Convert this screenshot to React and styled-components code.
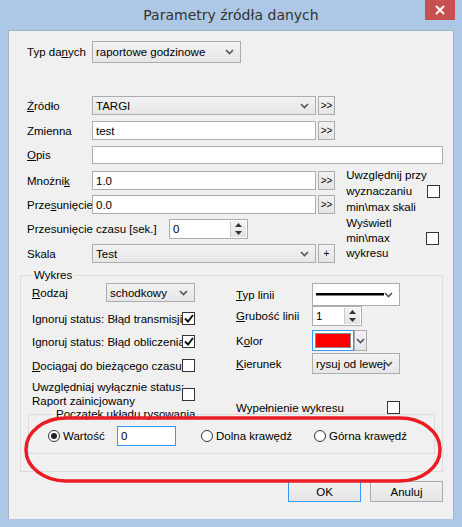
import React from "react";
import styled, { createGlobalStyle } from "styled-components";

const G = createGlobalStyle`
  html,body{margin:0;padding:0;background:#adc8e6;}
  body{font-family:"Liberation Sans",Arial,sans-serif;font-size:11.5px;color:#000;}
`;
const Win = styled.div`width:462px;height:527px;background:#adc8e6;position:relative;display:flex;flex-direction:column;box-sizing:border-box;`;
const TitleBar = styled.div`height:30px;display:flex;align-items:center;justify-content:center;position:relative;font-family:"DejaVu Sans",sans-serif;font-size:14px;color:#333;`;
const Close = styled.div`position:absolute;right:7px;top:0;width:30px;height:20px;background:#c75050;display:flex;align-items:center;justify-content:center;`;
const Client = styled.div`margin:0 8px;height:489px;background:#f0f0f0;border:1px solid #a0b4ca;border-bottom:none;box-sizing:border-box;padding:10px 10px 0 11px;display:flex;flex-direction:column;position:relative;`;
const Row = styled.div`display:flex;align-items:center;height:${p=>p.h||19}px;margin-top:${p=>p.mt||0}px;padding-left:${p=>p.pl??7}px;`;
const Label = styled.span`width:${p=>p.w||65}px;flex:none;white-space:nowrap;line-height:14px;`;
const Field = styled.div`width:${p=>p.w}px;height:${p=>p.h||19}px;box-sizing:border-box;border:1px solid ${p=>p.blue?"#3399ff":"#abadb3"};background:${p=>p.grey?"linear-gradient(#f2f2f2,#e6e6e6)":"#fff"};display:flex;align-items:center;padding-left:3px;flex:none;position:relative;white-space:nowrap;`;
const Arrow = styled.span`position:absolute;right:6px;top:50%;transform:translateY(-50%);display:flex;`;
const Btn = styled.div`width:17px;height:19px;box-sizing:border-box;border:1px solid #acacac;background:linear-gradient(#f2f2f2,#e5e5e5);margin-left:2px;display:flex;align-items:center;justify-content:center;font-size:10px;flex:none;`;
const Box = styled.div`width:13px;height:13px;border:1px solid #333;background:#fff;box-sizing:border-box;flex:none;display:flex;align-items:center;justify-content:center;`;
const Spin = styled.div`position:absolute;right:1px;top:1px;bottom:1px;width:15px;background:linear-gradient(#f4f4f4,#e2e2e2);border-left:1px solid #ccc;display:flex;flex-direction:column;align-items:center;justify-content:space-around;`;
const Fs = styled.fieldset`margin:0;border:1px solid #dcdcdc;padding:${p=>p.pad};box-sizing:border-box;position:relative;`;
const Lg = styled.legend`padding:0 2px;margin-left:6px;line-height:12px;`;
const Cols = styled.div`display:flex;`;
const Col = styled.div`display:flex;flex-direction:column;width:${p=>p.w}px;`;
const SideText = styled.div`display:flex;justify-content:space-between;align-items:center;width:93px;line-height:16px;white-space:nowrap;`;
const Radio = styled.span`width:12px;height:12px;border-radius:50%;border:1px solid #333;box-sizing:border-box;background:#fff;display:inline-flex;align-items:center;justify-content:center;margin-right:3px;flex:none;`;
const Dot = styled.span`width:6px;height:6px;border-radius:50%;background:#222;`;
const Footer = styled.div`display:flex;justify-content:flex-end;gap:9px;margin-top:9px;`;
const PushBtn = styled.div`width:73px;height:21px;box-sizing:border-box;border:1px solid ${p=>p.def?"#3399ff":"#acacac"};background:linear-gradient(#f0f0f0,#e5e5e5);display:flex;align-items:center;justify-content:center;`;
const Ellipse = styled.svg`position:absolute;left:15px;top:385px;pointer-events:none;`;

const Chev = () => <svg width="9" height="6" viewBox="0 0 9 6"><path d="M1 1l3.5 3.5L8 1" stroke="#555" strokeWidth="1.6" fill="none"/></svg>;
const Check = () => <svg width="10" height="9" viewBox="0 0 10 9"><path d="M1 4.5l3 3L9 1" stroke="#111" strokeWidth="2" fill="none"/></svg>;
const Sel = ({w,h,children}) => <Field w={w} h={h} grey>{children}<Arrow><Chev/></Arrow></Field>;
const SpinField = ({w,v}) => <Field w={w} h={20}>{v}<Spin><svg width="7" height="4"><path d="M0 4L3.5 0L7 4z" fill="#333"/></svg><svg width="7" height="4"><path d="M0 0L3.5 4L7 0z" fill="#333"/></svg></Spin></Field>;
const U = styled.u``;

export default function App(){
  return <Win><G/>
    <TitleBar>Parametry źródła danych
      <Close><svg width="10" height="10"><path d="M1 1L9 9M9 1L1 9" stroke="#fff" strokeWidth="2"/></svg></Close>
    </TitleBar>
    <Client>
      <Row h={22}><Label>Typ da<U>n</U>ych</Label><Sel w={149} h={22}>raportowe godzinowe</Sel></Row>
      <Row mt={33}><Label><U>Ź</U>ródło</Label><Sel w={224}>TARGI</Sel><Btn>&gt;&gt;</Btn></Row>
      <Row mt={6}><Label>Zmienna</Label><Field w={224}>test</Field><Btn>&gt;&gt;</Btn></Row>
      <Row mt={6} h={18}><Label><U>O</U>pis</Label><Field w={351} h={18}/></Row>
      <Cols>
        <Col w={337}>
          <Row mt={7}><Label>Mnożni<U>k</U></Label><Field w={224}>1.0</Field><Btn>&gt;&gt;</Btn></Row>
          <Row mt={5}><Label>Prze<U>s</U>unięcie</Label><Field w={224}>0.0</Field><Btn>&gt;&gt;</Btn></Row>
          <Row mt={5} h={20}><Label w={142}>Przesunięcie czasu [sek.]</Label><SpinField w={79} v="0"/></Row>
          <Row mt={5}><Label>Skala</Label><Sel w={224}>Test</Sel><Btn>+</Btn></Row>
        </Col>
        <Col w={100} style={{paddingTop:3}}>
          <SideText><span>Uwzględnij przy<br/>wyznaczaniu<br/>min\max skali</span><Box/></SideText>
          <SideText style={{marginTop:1}}><span style={{lineHeight:"15px"}}>Wyświetl<br/>min\max<br/>wykresu</span><Box/></SideText>
        </Col>
      </Cols>
      <Fs pad="2px 0 9px 5px" style={{marginTop:6,height:203}}>
        <Lg>Wykres</Lg>
        <Cols>
          <Col w={204}>
            <Row h={19} pl={6}><Label w={74}><U>R</U>odzaj</Label><Sel w={89}>schodkowy</Sel></Row>
            <Row h={13} mt={10} pl={6}><Label w={150}>Ignoruj status: Błąd transmisji</Label><Box><Check/></Box></Row>
            <Row h={13} mt={10} pl={6}><Label w={150}>Ignoruj status: Błąd obliczenia</Label><Box><Check/></Box></Row>
            <Row h={13} mt={11} pl={6}><Label w={150}><U>D</U>ociągaj do bieżącego czasu</Label><Box/></Row>
            <Row h={30} mt={7} pl={6}><Label w={150}>Uwzględniaj wyłącznie status:<br/>Raport zainicjowany</Label><Box/></Row>
          </Col>
          <Col w={180}>
            <Row h={23} pl={6}><Label w={76}><U>T</U>yp linii</Label><Field w={88} h={23}><svg width="68" height="3"><rect width="68" height="2.5" fill="#000"/></svg><Arrow><Chev/></Arrow></Field></Row>
            <Row h={20} pl={6}><Label w={76}><U>G</U>rubość linii</Label><SpinField w={50} v="1"/></Row>
            <Row h={21} mt={4} pl={6}><Label w={76}>K<U>o</U>lor</Label>
              <Field w={42} h={21} blue style={{padding:2}}><div style={{width:"100%",height:"100%",background:"#f00",border:"1px solid #888",boxSizing:"border-box"}}/></Field>
              <Field w={13} h={21} grey style={{padding:0,justifyContent:"center"}}><Chev/></Field></Row>
            <Row h={21} mt={2} pl={6}><Label w={76}><U>K</U>ierunek</Label><Sel w={88} h={21}>rysuj od lewej</Sel></Row>
            <Row h={13} mt={27} pl={6}><Label w={151}>Wypełnienie wykresu</Label><Box/></Row>
          </Col>
        </Cols>
        <Fs pad="3px 0 0 19px" style={{marginTop:-6,marginLeft:2,width:407,height:46}}>
          <Lg>Początek układu rysowania</Lg>
          <Row pl={0} h={20} mt={3}>
            <Radio><Dot/></Radio><span style={{width:54}}>Wartość</span><Field w={59} h={20} blue>0</Field>
            <span style={{width:25}}/><Radio/><span style={{width:98}}>Dolna krawędź</span><Radio/>Górna krawędź
          </Row>
        </Fs>
      </Fs>
      <Footer><PushBtn def>OK</PushBtn><PushBtn>Anuluj</PushBtn></Footer>
      <Ellipse width="418" height="68" viewBox="0 0 418 68"><rect x="2" y="2" width="414" height="63" rx="40" ry="31" fill="none" stroke="#ec1c24" strokeWidth="3.5"/></Ellipse>
    </Client>
  </Win>;
}
